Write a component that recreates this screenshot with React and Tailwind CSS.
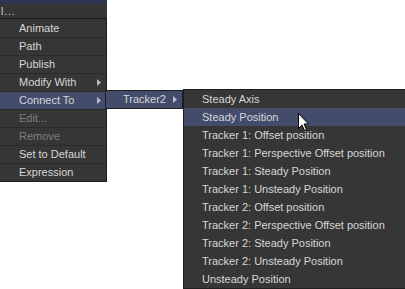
import React from 'react';

const mainItems = [
    { label: 'Animate' },
    { label: 'Path' },
    { label: 'Publish' },
    { label: 'Modify With', arrow: true },
    { label: 'Connect To', arrow: true, active: true },
    { label: 'Edit...', disabled: true },
    { label: 'Remove', disabled: true },
    { label: 'Set to Default' },
    { label: 'Expression' },
];

const trackerItems = [
    'Steady Axis',
    'Steady Position',
    'Tracker 1: Offset position',
    'Tracker 1: Perspective Offset position',
    'Tracker 1: Steady Position',
    'Tracker 1: Unsteady Position',
    'Tracker 2: Offset position',
    'Tracker 2: Perspective Offset position',
    'Tracker 2: Steady Position',
    'Tracker 2: Unsteady Position',
    'Unsteady Position',
];

function Arrow() {
    return (
        <svg width="4" height="7" viewBox="0 0 4 7" className="shrink-0">
            <path d="M0 0 L4 3.5 L0 7 Z" fill="#b8bcc8" />
        </svg>
    );
}

export default function App() {
    return (
        <div
            className="relative w-[405px] h-[289px] bg-white overflow-hidden text-[11px] leading-none"
            style={{ fontFamily: '"Liberation Sans", Arial, sans-serif' }}
        >
            {/* Top bar behind the menu */}
            <div className="w-[107px] h-[18px] bg-[#353535] border-t-4 border-[#2d3550] flex items-end pb-[1px]">
                <span className="text-[#d8d8d8] text-[10px] pl-[1px] tracking-[1px]">l...</span>
            </div>

            {/* Main context menu */}
            <div className="w-[107px] bg-[#363636] border border-[#1e1e1e] border-l-0">
                {mainItems.map((item, i) => (
                    <div
                        key={item.label}
                        className={`h-[18px] flex items-center pl-[19px] pr-[5px] ${
                            i > 0 ? 'border-t border-[#2b2b2b]' : ''
                        } ${item.active ? 'bg-[#444c6c]' : ''} ${
                            item.disabled ? 'text-[#7e7e7e]' : 'text-[#d6d6d6]'
                        }`}
                    >
                        <span className="flex-1">{item.label}</span>
                        {item.arrow && <Arrow />}
                    </div>
                ))}
            </div>

            {/* Tracker2 submenu */}
            <div className="absolute left-[105px] top-[90px] w-[78px] h-[19px] bg-[#444c6c] border border-[#1e1e1e] flex items-center pl-[17px] pr-[5px] text-[#d6d6d6]">
                <span className="flex-1">Tracker2</span>
                <Arrow />
            </div>

            {/* Tracker positions submenu */}
            <div className="absolute left-[183px] top-[89px] w-[222px] h-[200px] bg-[#363636] border border-[#1e1e1e] border-r-0">
                {trackerItems.map((label, i) => (
                    <div
                        key={label}
                        className={`h-[18px] flex items-center pl-[18px] ${
                            i === 1 ? 'bg-[#444c6c]' : ''
                        } text-[#d6d6d6]`}
                    >
                        {label}
                    </div>
                ))}
            </div>

            {/* Mouse cursor */}
            <svg
                className="absolute left-[298px] top-[113px]"
                width="12"
                height="19"
                viewBox="0 0 12 19"
            >
                <path
                    d="M0.5 0.5 L0.5 15.5 L4 12 L6.5 17.5 L8.5 16.5 L6 11 L10.5 11 Z"
                    fill="#ffffff"
                    stroke="#000000"
                    strokeWidth="1"
                />
            </svg>
        </div>
    );
}
